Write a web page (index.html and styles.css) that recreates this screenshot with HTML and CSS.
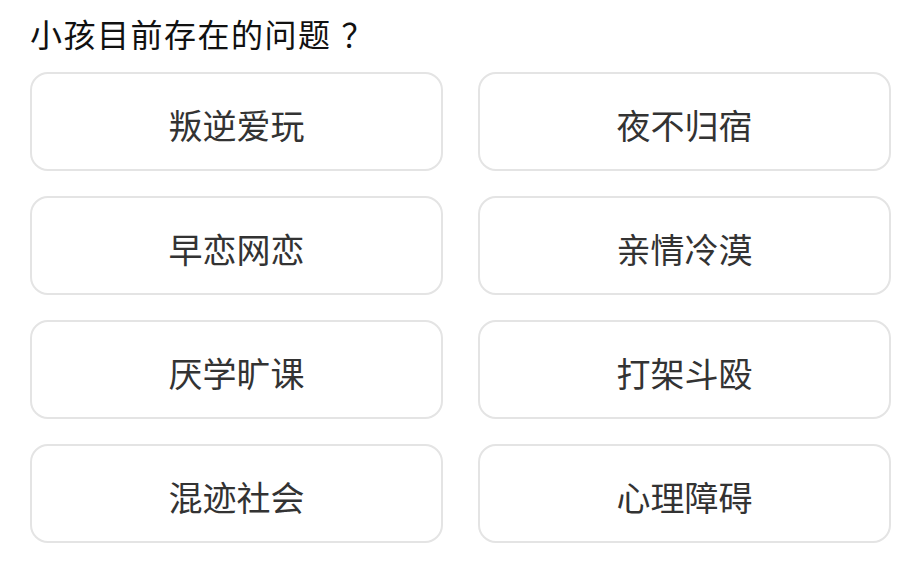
FILE: index.html
```html
<!DOCTYPE html>
<html lang="zh-CN">
<head>
<meta charset="utf-8">
<title>小孩目前存在的问题</title>
<link rel="stylesheet" href="styles.css">
</head>
<body>
<div class="page">
  <h1 class="title">小孩目前存在的问题<span class="qmark">？</span></h1>
  <div class="options">
    <div class="option">叛逆爱玩</div>
    <div class="option">夜不归宿</div>
    <div class="option">早恋网恋</div>
    <div class="option">亲情冷漠</div>
    <div class="option">厌学旷课</div>
    <div class="option">打架斗殴</div>
    <div class="option">混迹社会</div>
    <div class="option">心理障碍</div>
  </div>
</div>
</body>
</html>
```
FILE: styles.css
```css
html, body {
  margin: 0;
  padding: 0;
  background: #ffffff;
}
body {
  font-family: "Noto Sans CJK SC", "Noto Sans", sans-serif;
  width: 900px;
  height: 582px;
  overflow: hidden;
}
.page {
  padding: 12px 0 0 30px;
}
.title {
  margin: 0;
  font-size: 32px;
  font-weight: 400;
  line-height: 42px;
  letter-spacing: 1.5px;
  color: #111111;
}
.qmark {
  margin-left: 10px;
}
.options {
  margin-top: 18px;
  display: grid;
  grid-template-columns: 413px 413px;
  column-gap: 35px;
  row-gap: 25px;
}
.option {
  box-sizing: border-box;
  height: 99px;
  border: 2px solid #e4e4e4;
  border-radius: 18px;
  display: flex;
  align-items: center;
  justify-content: center;
  padding-top: 6px;
  font-size: 34px;
  color: #333333;
}
```
